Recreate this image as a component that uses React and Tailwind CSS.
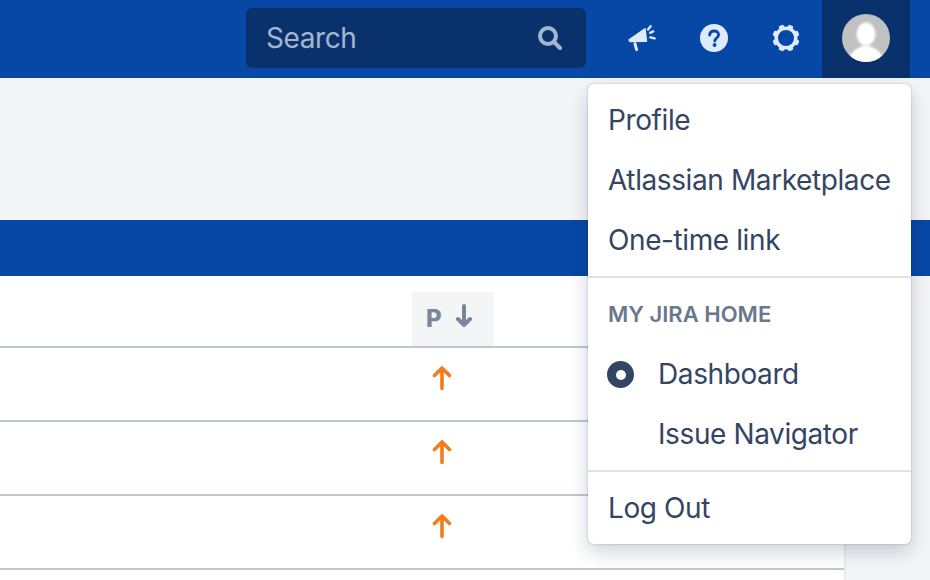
import React from "react";

const font = { fontFamily: "Inter, 'Noto Sans', sans-serif" };

function Megaphone() {
  return (
    <svg width="28" height="28" viewBox="0 0 28 28" fill="#deebff" stroke="#deebff" strokeLinejoin="round" strokeLinecap="round">
      <path d="M1.2 16 L17 4.8 L18.4 17.2 L2 17.4Z" strokeWidth="1.6" />
      <path d="M7 19.8 L8.6 25.6" fill="none" strokeWidth="3" />
      <path d="M20 5.4 L22.6 2.2" fill="none" strokeWidth="2.4" />
      <path d="M22.2 8.8 L25.2 7.4" fill="none" strokeWidth="2.4" />
      <path d="M22.4 13.4 L26.6 14.4" fill="none" strokeWidth="2.4" />
    </svg>
  );
}

function Help() {
  return (
    <svg width="28" height="28" viewBox="0 0 28 28">
      <circle cx="14" cy="14" r="14" fill="#deebff" />
      <path d="M9.6 11.2 C9.8 8.4 11.8 7 14.2 7 C16.8 7 18.6 8.6 18.6 10.8 C18.6 12.6 17.6 13.5 16.3 14.4 C15.2 15.2 14.8 15.6 14.8 17" fill="none" stroke="#0747a6" strokeWidth="2.8" strokeLinecap="round" />
      <circle cx="14.6" cy="21" r="1.9" fill="#0747a6" />
    </svg>
  );
}

function Gear() {
  return (
    <svg width="28" height="28" viewBox="0 0 30 30">
      <circle cx="15" cy="15" r="10.5" fill="none" stroke="#deebff" strokeWidth="3.8" />
      {[0, 45, 90, 135, 180, 225, 270, 315].map((a) => (
        <rect key={a} x="12.2" y="0.5" width="5.6" height="4.4" rx="1.2" fill="#deebff" transform={`rotate(${a + 22.5} 15 15)`} />
      ))}
    </svg>
  );
}

function Avatar() {
  return (
    <svg width="48" height="48" viewBox="0 0 48 48">
      <defs>
        <clipPath id="av"><circle cx="24" cy="24" r="24" /></clipPath>
        <filter id="blur"><feGaussianBlur stdDeviation="1.2" /></filter>
      </defs>
      <g clipPath="url(#av)">
        <rect width="48" height="48" fill="#c1c1c1" />
        <g filter="url(#blur)" fill="#fff">
          <ellipse cx="24" cy="20" rx="9.5" ry="11.5" />
          <path d="M6 50 C7 38 14 35 20 32 L28 32 C34 35 41 38 42 50Z" />
        </g>
      </g>
    </svg>
  );
}

function SearchIcon() {
  return (
    <svg width="24" height="24" viewBox="0 0 24 24" fill="none" stroke="#a5b5d0" strokeWidth="4" strokeLinecap="round">
      <circle cx="10" cy="10" r="8" />
      <path d="M16 16 L22 22" />
    </svg>
  );
}

function Up() {
  return (
    <svg width="20" height="26" viewBox="0 0 20 26" fill="none" stroke="#f57c1b" strokeWidth="3.6" strokeLinecap="round" strokeLinejoin="round">
      <path d="M10 23.5 V3 M2.5 10.5 L10 3 L17.5 10.5" />
    </svg>
  );
}

function Row() {
  return (
    <div className="h-[74px] border-b-2 border-[#c1c7d0] flex">
      <div className="ml-[432px] mt-[17px]"><Up /></div>
    </div>
  );
}

function Item({ children, indent }) {
  return (
    <div className={`h-[60px] flex items-center text-[28px] tracking-[-0.4px] text-[#344563] ${indent ? "pl-[70px]" : "pl-[20px]"}`}>
      {children}
    </div>
  );
}

export default function App() {
  return (
    <div className="relative w-[930px] h-[580px] overflow-hidden bg-[#f4f5f7]" style={font}>
      <header className="h-[78px] bg-[#0747a6] flex items-center justify-end pr-[20px] pb-[2px]">
        <div className="w-[340px] h-[60px] rounded-[6px] bg-[#09326c] flex items-center justify-between pl-[20px] pr-[24px] text-[28px] tracking-[-0.4px] text-[#a5b5d0]">
          <span>Search</span>
          <SearchIcon />
        </div>
        <div className="ml-[40px] w-[32px] flex justify-center"><Megaphone /></div>
        <div className="ml-[40px] w-[32px] flex justify-center"><Help /></div>
        <div className="ml-[40px] w-[32px] flex justify-center"><Gear /></div>
        <div className="ml-[20px] w-[88px] self-stretch -mb-[2px] pb-[2px] bg-[#09326c] flex items-center justify-center"><Avatar /></div>
      </header>
      <div className="h-[142px]" />
      <div className="h-[56px] bg-[#0747a6]" />
      <div className="w-[846px] h-[304px] bg-white border-r-2 border-[#ebecf0]">
        <div className="h-[72px] border-b-2 border-[#c1c7d0] pt-[16px]">
          <div className="ml-[412px] w-[82px] h-[54px] bg-[#f4f5f7] flex items-center pl-[14px] gap-[14px] text-[24px] font-extrabold text-[#7a869a]">
            <span>P</span>
            <svg width="16" height="24" viewBox="0 0 16 24" fill="none" stroke="#7a869a" strokeWidth="4" strokeLinecap="round" strokeLinejoin="round" className="-mt-[6px]">
              <path d="M8 2 V21 M2 15 L8 21 L14 15" />
            </svg>
          </div>
        </div>
        <Row />
        <Row />
        <Row />
      </div>
      <div className="absolute left-[588px] top-[84px] w-[323px] h-[460px] bg-white rounded-[6px] shadow-[0_8px_20px_rgba(9,30,66,0.2),0_0_2px_rgba(9,30,66,0.3)] pt-[6px]">
        <Item>Profile</Item>
        <Item>Atlassian Marketplace</Item>
        <Item>One-time link</Item>
        <div className="h-[2px] mt-[6px] bg-[#dfe1e6]" />
        <div className="h-[66px] pl-[20px] pt-[23px] text-[22px] leading-[26px] font-semibold text-[#6b778c]">MY JIRA HOME</div>
        <div className="relative">
          <div className="absolute left-[19px] top-[17px] w-[27px] h-[27px] rounded-full bg-[#344563] flex items-center justify-center">
            <div className="w-[10px] h-[10px] rounded-full bg-white" />
          </div>
          <Item indent>Dashboard</Item>
        </div>
        <Item indent>Issue Navigator</Item>
        <div className="h-[2px] mt-[6px] bg-[#dfe1e6]" />
        <div className="mt-[6px]"><Item>Log Out</Item></div>
      </div>
    </div>
  );
}
